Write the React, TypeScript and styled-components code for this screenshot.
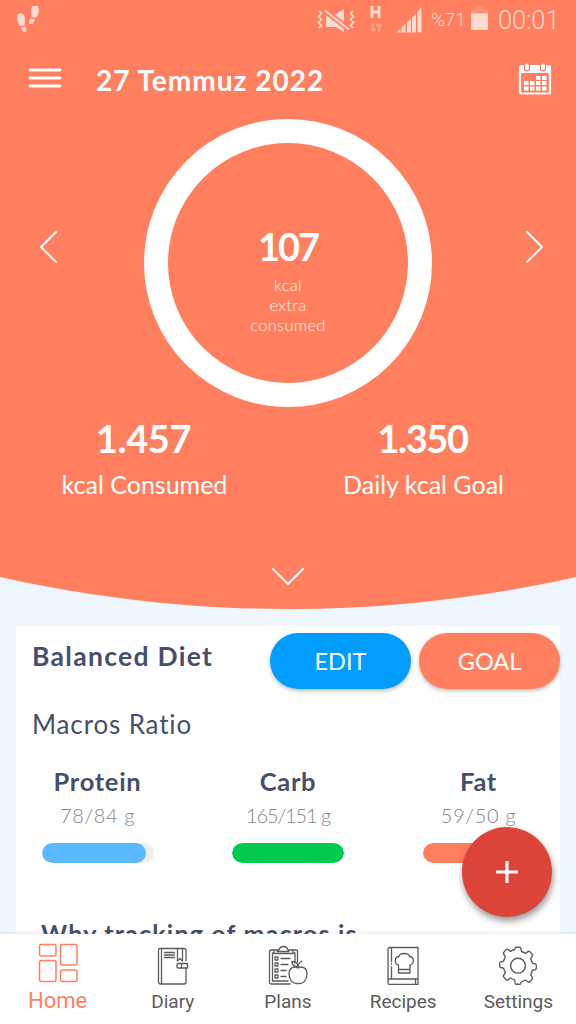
import type { ReactNode } from "react";
import styled, { createGlobalStyle } from "styled-components";

const GlobalStyle = createGlobalStyle`
  * {
    box-sizing: border-box;
  }
  body {
    margin: 0;
    font-family: Lato, "Liberation Sans", sans-serif;
    background-color: #f0f6fd;
  }
`;

const Screen = styled.div`
  display: flex;
  flex-direction: column;
  width: 576px;
  height: 1024px;
  overflow: hidden;
  background-color: #f0f6fd;
`;

const Hero = styled.header`
  flex: none;
  height: 609px;
  color: white;
  background-color: #ff7f5f;
  clip-path: circle(1312px at 50% -703px);
`;

const StatusBar = styled.div`
  display: flex;
  align-items: center;
  height: 39px;
  padding: 0 17px;
  color: #ffdace;
  font-family: Roboto, sans-serif;
`;

const StatusIcons = styled.div`
  display: flex;
  align-items: center;
  margin-left: auto;

  > svg:nth-of-type(2) {
    margin-left: 14px;
  }
  > svg:nth-of-type(3) {
    margin: 0 9px 0 13px;
  }
`;

const Battery = styled.span`
  width: 40px;
  font-size: 19px;
  font-weight: 300;
  letter-spacing: -0.2px;
`;

const Clock = styled.span`
  width: 61px;
  margin-left: 10px;
  font-size: 25.5px;
  font-weight: 300;
  letter-spacing: -0.1px;
  white-space: nowrap;
`;

const TopBar = styled.div`
  display: flex;
  align-items: center;
  height: 80px;
  padding: 0 24px 0 28px;

  > svg:first-child {
    margin-bottom: 3px;
  }
  > svg:last-child {
    margin-bottom: 1px;
  }
`;

const Today = styled.h1`
  flex: 1;
  margin: 1px 0 0 34px;
  font-size: 28px;
  line-height: 36px;
  font-weight: 700;
  letter-spacing: 1px;
`;

const RingRow = styled.div`
  display: flex;
  justify-content: space-between;
  height: 288px;
  padding: 0 25px 0 32px;

  > svg {
    margin-top: 111px;
  }
`;

const Ring = styled.div`
  display: flex;
  flex-direction: column;
  align-items: center;
  width: 288px;
  height: 288px;
  margin-left: -7px;
  padding-top: 79px;
  border: 24px solid white;
  border-radius: 50%;
`;

const RingValue = styled.div`
  font-size: 38px;
  line-height: 48px;
  font-weight: 700;
  letter-spacing: -2px;
`;

const RingCaption = styled.div`
  margin-top: 5px;
  font-size: 16.5px;
  line-height: 20px;
  font-weight: 300;
  letter-spacing: 0.3px;
  text-align: center;
  color: #fff3e6;
`;

const Totals = styled.div`
  display: grid;
  grid-template-columns: 1fr 1fr;
  padding: 7px 14px 0 4px;
`;

const Total = styled.div`
  text-align: center;
`;

const TotalValue = styled.div<{ $spacing: number }>`
  font-size: 38px;
  line-height: 48px;
  font-weight: 700;
  letter-spacing: ${({ $spacing }) => $spacing}px;
`;

const TotalLabel = styled.div`
  margin-top: 6px;
  padding-left: 2px;
  font-size: 25px;
  line-height: 32px;
`;

const Expand = styled.div`
  display: flex;
  justify-content: center;
  margin-top: 67px;
`;

const Content = styled.main`
  flex: 1;
  min-height: 0;
  padding: 17px 16px 0;
  overflow: hidden;
`;

const Card = styled.section`
  height: 400px;
  padding-top: 7px;
  color: #465069;
  background-color: white;
`;

const CardHeader = styled.div`
  display: flex;
  gap: 8px;
  height: 56px;
`;

const DietName = styled.h2`
  flex: 1;
  margin: 7px 0 0 16px;
  font-size: 26.5px;
  line-height: 32px;
  font-weight: 700;
  letter-spacing: 1.3px;
  white-space: nowrap;
`;

const PillButton = styled.button<{ $color: string }>`
  width: 141px;
  height: 56px;
  padding: 0;
  border: 0;
  border-radius: 28px;
  color: white;
  background-color: ${({ $color }) => $color};
  box-shadow: 0 2px 4px rgba(0, 0, 0, 0.25);
  font-family: inherit;
  font-size: 23.5px;
`;

const CardSubtitle = styled.h3`
  margin: 19px 0 0 16px;
  font-size: 26px;
  line-height: 32px;
  font-weight: 400;
  letter-spacing: 0.85px;
`;

const Macros = styled.div`
  display: flex;
  justify-content: space-between;
  margin-top: 25px;
  padding: 0 25.5px;
`;

const MacroItem = styled.div`
  display: flex;
  flex-direction: column;
  align-items: center;
  width: 112px;
  white-space: nowrap;
`;

const MacroName = styled.div`
  font-size: 25.5px;
  line-height: 32px;
  font-weight: 700;
  letter-spacing: 0.7px;
`;

const MacroAmount = styled.div<{ $spacing: number }>`
  margin-top: 5px;
  font-size: 20px;
  line-height: 26px;
  font-weight: 300;
  letter-spacing: ${({ $spacing }) => $spacing}px;
  color: #858585;
`;

const Track = styled.div`
  width: 112px;
  height: 20px;
  margin-top: 15px;
  border-radius: 10px;
  overflow: hidden;
  background-color: #eeeeee;
`;

const Fill = styled.div<{ $color: string }>`
  height: 100%;
  border-radius: 10px;
  background-color: ${({ $color }) => $color};
`;

const Question = styled.p`
  margin: 54px 0 0 25px;
  font-size: 25px;
  line-height: 32px;
  font-weight: 700;
  letter-spacing: 1.2px;
  white-space: nowrap;
`;

const AddButton = styled.button`
  position: absolute;
  left: 462px;
  top: 827px;
  display: flex;
  align-items: center;
  justify-content: center;
  width: 90px;
  height: 90px;
  padding: 0;
  border: 0;
  border-radius: 50%;
  background-color: #db4437;
  box-shadow: 1px 4px 7px rgba(0, 0, 0, 0.42);
`;

const Nav = styled.nav`
  display: grid;
  flex: none;
  grid-template-columns: repeat(5, 1fr);
  height: 90px;
  background-color: white;
  box-shadow: 0 -1px 4px rgba(0, 0, 0, 0.08);
  z-index: 1;
`;

const NavItem = styled.a<{ $active?: boolean }>`
  display: flex;
  flex-direction: column;
  align-items: center;
  padding-top: ${({ $active }) => ($active ? 9 : 11)}px;
  color: ${({ $active }) => ($active ? "#ff7f5f" : "#5c5c5c")};
  font-family: Roboto, sans-serif;
  font-size: ${({ $active }) => ($active ? 22 : 19)}px;
  line-height: 26px;

  span {
    margin-top: ${({ $active }) => ($active ? 5 : 4)}px;
  }
`;

const Line = ({
  width,
  height,
  children,
  stroke = 1.5,
}: {
  width: number;
  height: number;
  children: ReactNode;
  stroke?: number;
}) => (
  <svg
    width={width}
    height={height}
    viewBox={`0 0 ${width} ${height}`}
    fill="none"
    stroke="currentColor"
    strokeWidth={stroke}
    strokeLinecap="round"
    strokeLinejoin="round"
  >
    {children}
  </svg>
);

const Footsteps = () => (
  <svg width="22" height="28" viewBox="0 0 22 28" fill="currentColor">
    <path d="M0 12C0 8 2 7 4 7.200C7 7.500 8 10 8 13L7.500 19.500L3 20C1 17 0 15 0 12Z" />
    <path d="M4 21.500L8.500 20.800C10 23 10 26 7.500 26C5.500 26 5 24 4 21.500Z" />
    <path d="M22 4C22 1 20-1 18-.800C15-.500 14 2 14 5L14.300 11L19 12C21 9 22 7 22 4Z" />
    <path d="M13.500 12.500L17.700 13.500C17.500 16 16.500 18 14 18C11.500 18 11.500 15.500 13.500 12.500Z" />
  </svg>
);

const Muted = () => (
  <svg width="38" height="26" viewBox="0 0 38 26" fill="currentColor">
    <path
      d="M2 4l2.500 2.500-3 3 3 3-3 3 3 3L2 21M36 4l-2.500 2.500 3 3-3 3 3 3-3 3L36 21"
      fill="none"
      stroke="currentColor"
      strokeWidth="1.700"
    />
    <path d="M9 9h7l11-7v23l-8-5H9z" />
    <path d="M7 3l26 20" stroke="#ff7f5f" strokeWidth="5.500" />
    <path d="M8 3.500l24 19" stroke="currentColor" strokeWidth="2.200" />
  </svg>
);

const DataIndicator = () => (
  <svg width="14" height="30" viewBox="0 0 14 30" fill="none" stroke="currentColor">
    <path d="M3 1v12M10 1v12M3 7h7" strokeWidth="2.800" />
    <path d="M4 18v8M1.500 23.500L4 26l2.500-2.500M10 27v-8M7.500 21.500L10 19l2.500 2.500" strokeWidth="1.700" opacity=".45" />
  </svg>
);

const Signal = () => (
  <svg width="26" height="26" viewBox="0 0 26 26" fill="currentColor">
    <path d="M0 25.500l4.500-3.500v3.500zM5.500 20.500l4-3.500v8.500h-4zM11 15.500l4-3.500v13.500h-4zM16 10.500L20 7v18.500h-4zM21.500 5L25.500 0v25.500h-4z" />
  </svg>
);

const BatteryIcon = () => (
  <svg width="17" height="24" viewBox="0 0 17 24" fill="currentColor">
    <path d="M4 0h8v3h5v5H0V3h4z" opacity=".2" />
    <path d="M0 7.500h17V24H0z" />
  </svg>
);

const MenuIcon = () => (
  <Line width={34} height={22} stroke={2.8}>
    <path d="M2 3h30M2 11h30M2 19h30" />
  </Line>
);

const CalendarIcon = () => (
  <svg width="34" height="34" viewBox="0 0 34 34">
    <rect x="2" y="4" width="30" height="27.500" rx="1.500" fill="none" stroke="white" strokeWidth="2.200" />
    <path d="M1 5h32v6H1z" fill="white" />
    <rect x="6.500" y=".800" width="5" height="8" rx="2.500" fill="white" stroke="#ff7f5f" strokeWidth="1.300" />
    <rect x="22.500" y=".800" width="5" height="8" rx="2.500" fill="white" stroke="#ff7f5f" strokeWidth="1.300" />
    <path
      d="M18 14h4.500v4H18zM24 14h4.500v4H24zM6 19h4.500v4H6zM12 19h4.500v4H12zM18 19h4.500v4H18zM24 19h4.500v4H24zM6 24.500h4.500v4H6zM12 24.500h4.500v4H12zM18 24.500h4.500v4H18zM24 24.500h4.500v4H24z"
      fill="white"
    />
  </svg>
);

const HomeIcon = () => (
  <Line width={40} height={40}>
    <rect x="1.500" y="1.500" width="16.500" height="11.500" rx="2" />
    <rect x="22.500" y="1.500" width="16.500" height="20.500" rx="2" />
    <rect x="1.500" y="17.500" width="16.500" height="21" rx="2" />
    <rect x="22.500" y="27" width="16.500" height="11.500" rx="2" />
  </Line>
);

const DiaryIcon = () => (
  <Line width={32} height={40} stroke={1.3}>
    <path d="M29 15.500V5.500Q29 3.500 27 3.500H3Q1.500 3.500 1.500 5v31.500Q1.500 39 3.500 39H27q2 0 2-2V23.500M4.500 3.500V39" />
    <path d="M7.500 7.500h10M7.500 10h10M7.500 12.500h10M20.500 3.500V16l2.500-2.500 2.500 2.500V3.500" />
    <path d="M21 18.500h9.500v4.500H21q-1 0-1-1v-2.500q0-1 1-1zM24.500 18.500V23" />
  </Line>
);

const PlansIcon = () => (
  <Line width={40} height={40} stroke={1.3}>
    <path d="M6 5H3Q1.500 5 1.500 6.500v31Q1.500 39 3 39h19M25 5h3q1.500 0 1.500 1.500V17" />
    <path d="M6 8H4.500v28H20M25 8h2v10M6 8.500V5h5q1-3.500 4.500-3.500T20 5h5v3.500zM9 6.500h12" />
    <path d="M7 12h3v3H7zM7 18h3v3H7zM7 24h3v3H7zM7 30h3v3H7zM13 13.500h9M13 19.500h7M13 25.500h5M13 31.500h5" />
    <path d="M30 23c-3-2-9-1-9 6 0 6 4 10.500 9 9.500C35 39.500 39 35 39 29c0-7-6-8-9-6zM30 23c0-4 1-5.500 4-7M30 21.500c-3 0-6-1.500-6-5 3.500 0 6 1.500 6 5z" />
  </Line>
);

const RecipesIcon = () => (
  <Line width={32} height={40} stroke={1.3}>
    <path d="M31 34V2.500H3Q1 2.500 1 4.500V38q0 1.500 2 1.500h28V34H3q-2 0-2 2M4.500 2.500v14M4.500 22v12M4.500 18.500v.5M28.500 34v5.500" />
    <path d="M11.500 28v-8C7 19 7.500 11.500 12 11.500c.5-4 10-4 10.500 0 5 0 5 7.500.500 8.500v8zM11.500 24.500H23" />
  </Line>
);

const SettingsIcon = () => (
  <Line width={40} height={40} stroke={1.4}>
    <circle cx="20" cy="20.700" r="7.400" />
    <path
      transform="translate(20 20.700) scale(.930 1) translate(-20 -20.500)"
      d="M18 2h4q1 0 1 1l.7 3.300q2.300.7 4.300 1.900l3-2q1-.5 1.700.2l2.700 2.800q.6.700.1 1.600l-1.900 2.900q1.200 2.100 1.900 4.300l3.200.7q1 .2 1 1.200v3.200q0 1-1 1.200l-3.200.7q-.7 2.300-1.900 4.300l1.900 2.900q.5.900-.1 1.600l-2.700 2.800q-.7.700-1.700.2l-3-2q-2 1.200-4.300 1.900L23 38q0 1-1 1h-4q-1 0-1-1l-.7-3.300q-2.300-.7-4.300-1.900l-3 2q-1 .5-1.700-.2l-2.700-2.800q-.6-.7-.1-1.600l1.900-2.900q-1.200-2-1.900-4.300l-3.200-.7q-1-.2-1-1.200v-3.200q0-1 1-1.200l3.200-.7q.7-2.200 1.900-4.300l-1.900-2.900q-.5-.9.1-1.600l2.700-2.800q.7-.7 1.700-.2l3 2q2-1.200 4.300-1.900L17 3q0-1 1-1z"
    />
  </Line>
);

const macros = [
  { name: "Protein", amount: "78/84 g", spacing: 0.6, percent: 93, color: "#5ab9ff" },
  { name: "Carb", amount: "165/151 g", spacing: -1.1, percent: 100, color: "#00ca4e" },
  { name: "Fat", amount: "59/50 g", spacing: 0.7, percent: 100, color: "#ff7f5f" },
];

const tabs = [
  { label: "Home", icon: <HomeIcon />, active: true },
  { label: "Diary", icon: <DiaryIcon /> },
  { label: "Plans", icon: <PlansIcon /> },
  { label: "Recipes", icon: <RecipesIcon /> },
  { label: "Settings", icon: <SettingsIcon /> },
];

const App = () => {
  return (
    <>
      <GlobalStyle />
      <Screen>
        <Hero>
          <StatusBar>
            <Footsteps />
            <StatusIcons>
              <Muted />
              <DataIndicator />
              <Signal />
              <Battery>%71</Battery>
              <span>
                <BatteryIcon />
              </span>
              <Clock>00:01</Clock>
            </StatusIcons>
          </StatusBar>
          <TopBar>
            <MenuIcon />
            <Today>27 Temmuz 2022</Today>
            <CalendarIcon />
          </TopBar>
          <RingRow>
            <Line width={32} height={34} stroke={2}>
              <path d="M24 2L9 17l15 15" />
            </Line>
            <Ring>
              <RingValue>107</RingValue>
              <RingCaption>
                kcal
                <br />
                extra
                <br />
                consumed
              </RingCaption>
            </Ring>
            <Line width={32} height={34} stroke={2}>
              <path d="M8 2l15 15L8 32" />
            </Line>
          </RingRow>
          <Totals>
            <Total>
              <TotalValue $spacing={-0.4}>1.457</TotalValue>
              <TotalLabel>kcal Consumed</TotalLabel>
            </Total>
            <Total>
              <TotalValue $spacing={-1.4}>1.350</TotalValue>
              <TotalLabel>Daily kcal Goal</TotalLabel>
            </Total>
          </Totals>
          <Expand>
            <Line width={34} height={20} stroke={2}>
              <path d="M2 2l15 15L32 2" />
            </Line>
          </Expand>
        </Hero>
        <Content>
          <Card>
            <CardHeader>
              <DietName>Balanced Diet</DietName>
              <PillButton $color="#009cff">EDIT</PillButton>
              <PillButton $color="#ff7f5f">GOAL</PillButton>
            </CardHeader>
            <CardSubtitle>Macros Ratio</CardSubtitle>
            <Macros>
              {macros.map((macro) => (
                <MacroItem key={macro.name}>
                  <MacroName>{macro.name}</MacroName>
                  <MacroAmount $spacing={macro.spacing}>{macro.amount}</MacroAmount>
                  <Track>
                    <Fill $color={macro.color} style={{ width: `${macro.percent}%` }} />
                  </Track>
                </MacroItem>
              ))}
            </Macros>
            <Question>Why tracking of macros is</Question>
          </Card>
        </Content>
        <Nav>
          {tabs.map((tab) => (
            <NavItem key={tab.label} $active={tab.active}>
              {tab.icon}
              <span>{tab.label}</span>
            </NavItem>
          ))}
        </Nav>
        <AddButton aria-label="Add">
          <svg width="24" height="24" viewBox="0 0 24 24" stroke="white" strokeWidth="3">
            <path d="M12 1v22M1 12h22" />
          </svg>
        </AddButton>
      </Screen>
    </>
  );
};

export default App;
